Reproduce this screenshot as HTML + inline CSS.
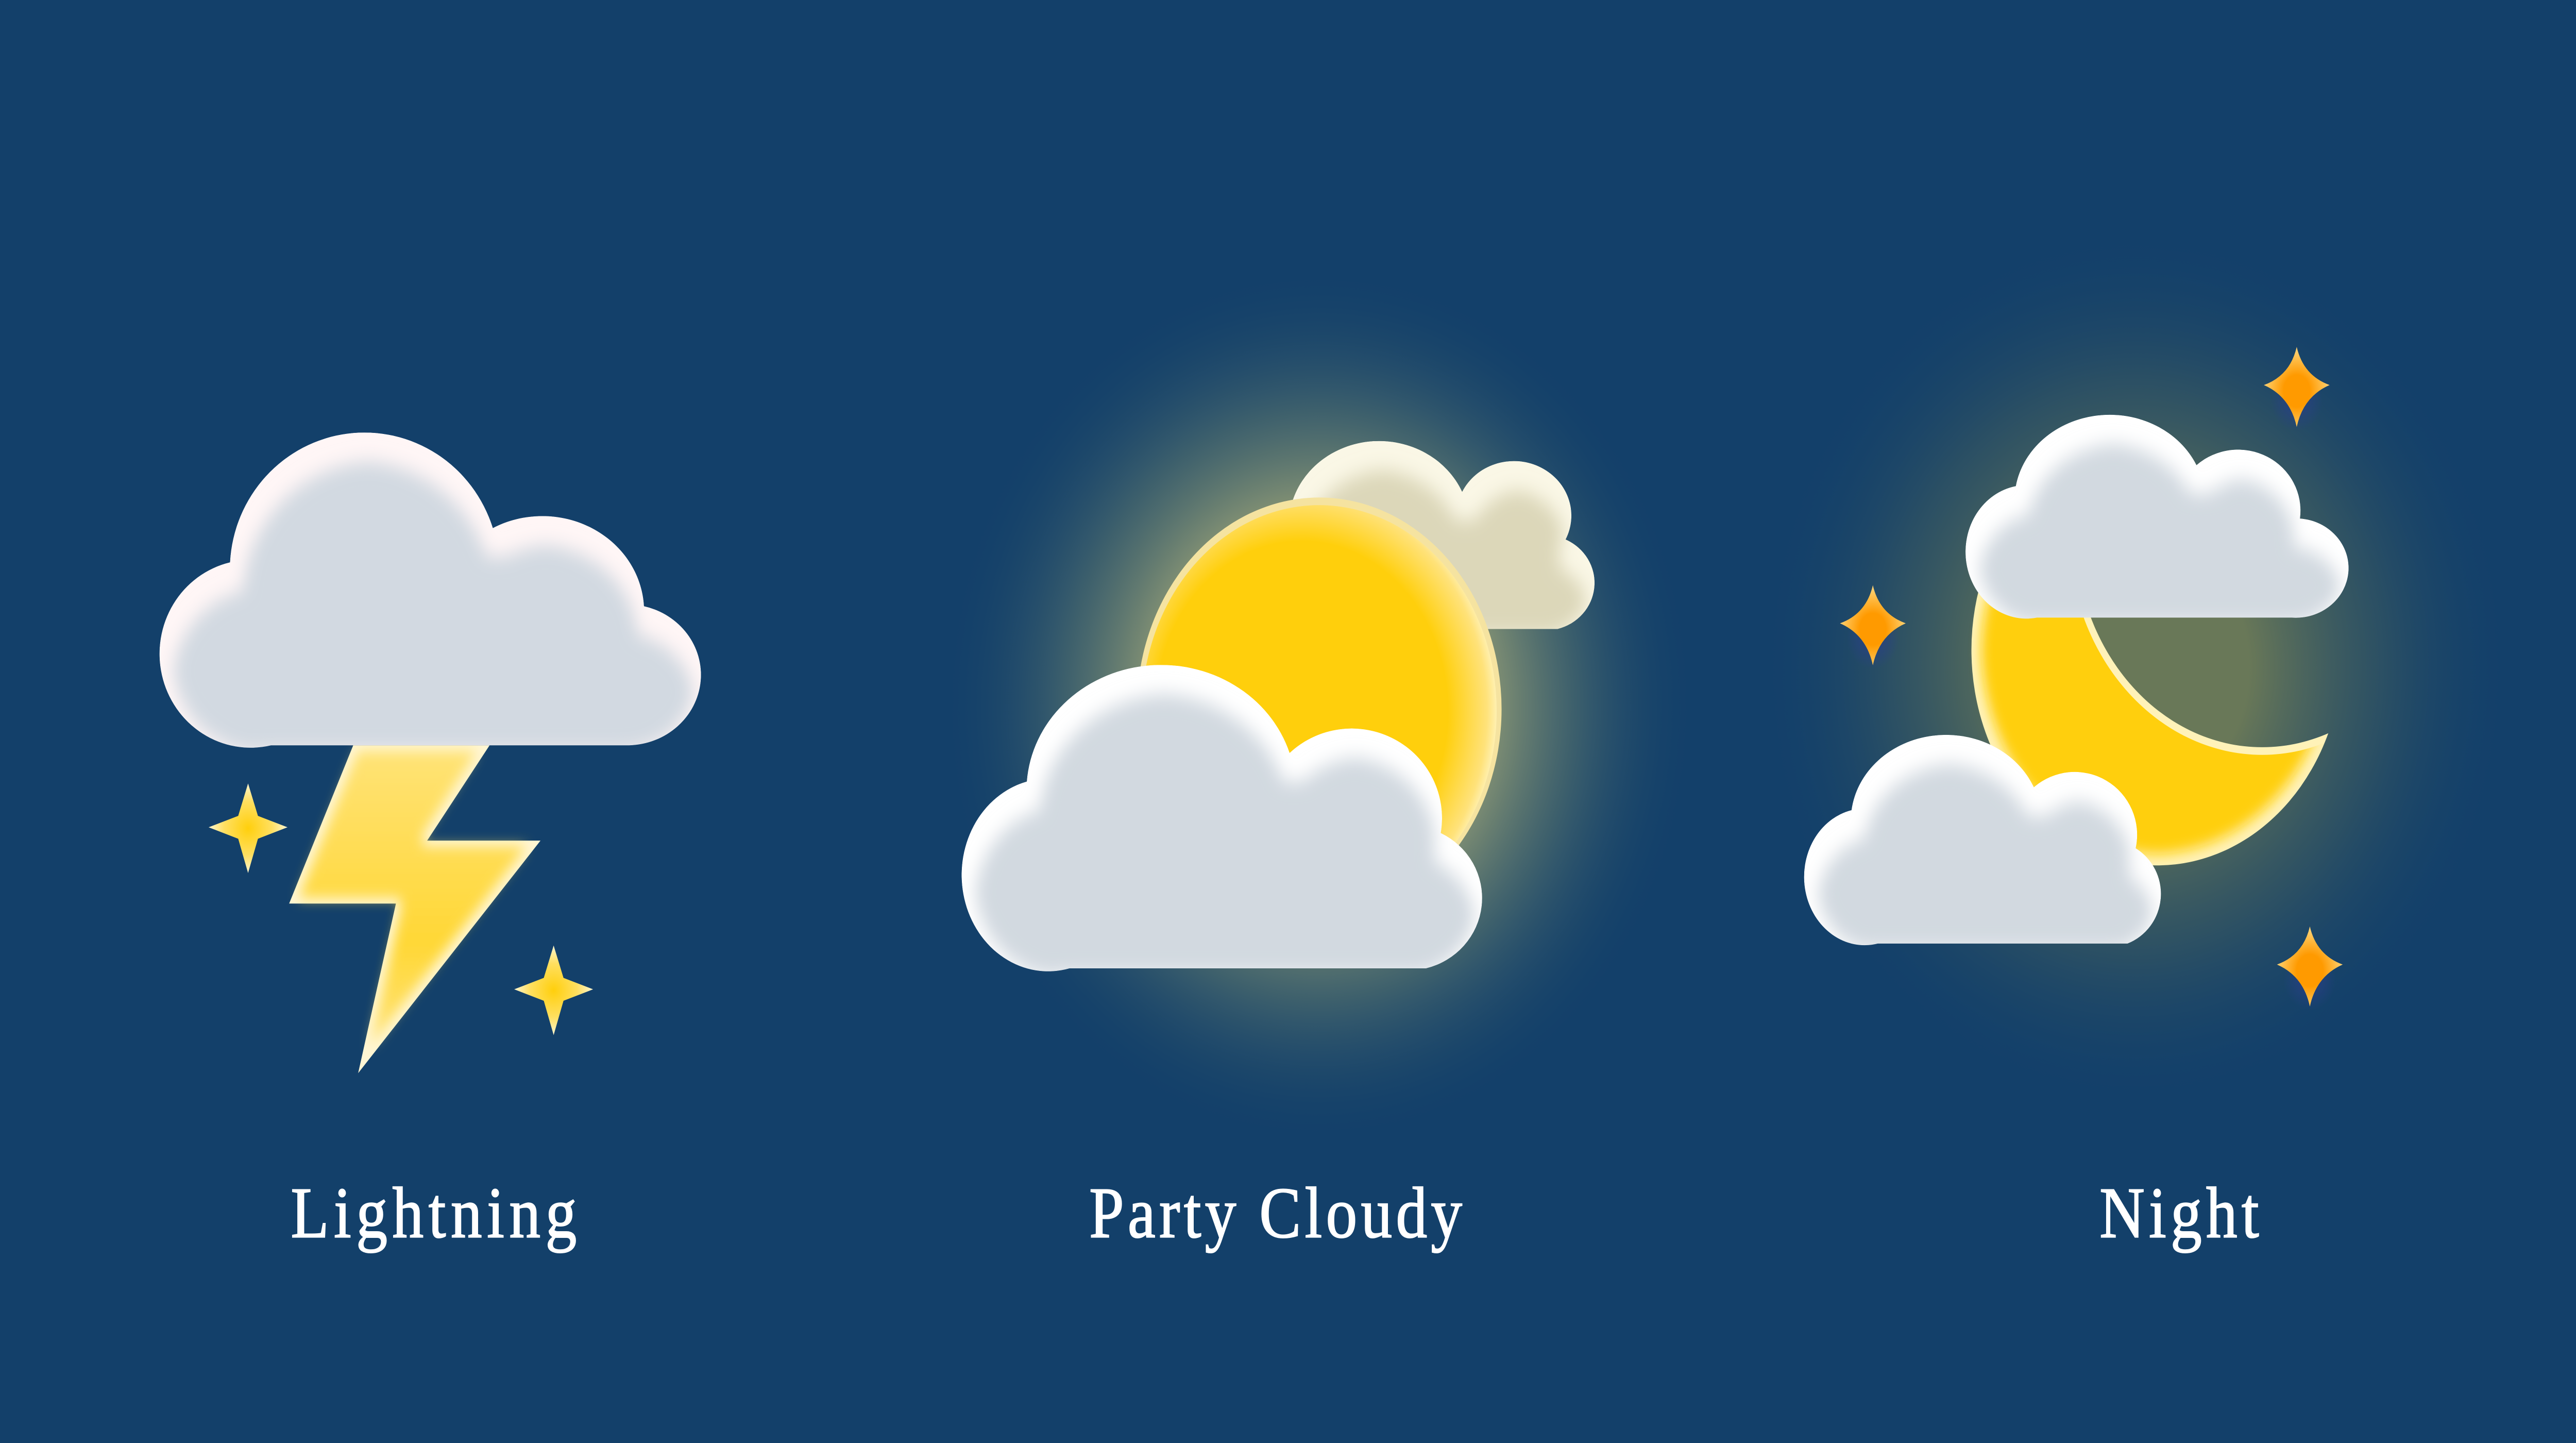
<!DOCTYPE html>
<html><head><meta charset="utf-8"><style>
html,body{margin:0;padding:0;background:#13406a;width:100%;height:100%;overflow:hidden}
svg{display:block;position:fixed;left:0;top:0;width:100vw;height:100vh}
</style></head><body>
<svg viewBox="0 0 1568 757" preserveAspectRatio="none" xmlns="http://www.w3.org/2000/svg">
<defs>
<radialGradient id="sunGlow" cx="803" cy="370" r="230" gradientUnits="userSpaceOnUse">
<stop offset="0.4" stop-color="#c8c27a" stop-opacity="0.75"/>
<stop offset="0.7" stop-color="#8a9a70" stop-opacity="0.3"/>
<stop offset="1" stop-color="#13406a" stop-opacity="0"/>
</radialGradient>
<radialGradient id="moonGlow" cx="1300" cy="350" r="230" gradientUnits="userSpaceOnUse">
<stop offset="0.3" stop-color="#8e9050" stop-opacity="0.7"/>
<stop offset="0.65" stop-color="#5a6e58" stop-opacity="0.35"/>
<stop offset="1" stop-color="#13406a" stop-opacity="0"/>
</radialGradient>
<radialGradient id="sunFill" cx="0.45" cy="0.5" r="0.55">
<stop offset="0.75" stop-color="#ffcf0c"/>
<stop offset="0.95" stop-color="#ffe27a"/>
<stop offset="1" stop-color="#fff0b0"/>
</radialGradient>
<linearGradient id="bolt" x1="0" y1="0" x2="0" y2="1">
<stop offset="0" stop-color="#ffe47a"/>
<stop offset="0.6" stop-color="#ffd838"/>
<stop offset="1" stop-color="#ffe890"/>
</linearGradient>
<radialGradient id="spark" cx="0.5" cy="0.5" r="0.5">
<stop offset="0" stop-color="#ffcf0c"/>
<stop offset="0.6" stop-color="#ffdf60"/>
<stop offset="1" stop-color="#fff6d0"/>
</radialGradient>
<radialGradient id="ostar" cx="0.5" cy="0.55" r="0.5">
<stop offset="0.4" stop-color="#ff9a00"/>
<stop offset="1" stop-color="#ffd070"/>
</radialGradient>
<radialGradient id="blueGlow" cx="0.5" cy="0.5" r="0.5">
<stop offset="0" stop-color="#2a3f8a" stop-opacity="0.9"/>
<stop offset="1" stop-color="#2a3f8a" stop-opacity="0"/>
</radialGradient>
<filter id="inner" x="-10%" y="-10%" width="120%" height="130%">
<feMorphology operator="erode" radius="6"/>
<feGaussianBlur stdDeviation="5"/>
<feOffset dx="2" dy="9"/>
</filter>
<filter id="soft" x="-20%" y="-20%" width="140%" height="140%">
<feMorphology operator="erode" radius="3"/>
<feGaussianBlur stdDeviation="3.5"/>
</filter>

<path id="c1" d="M165,391 H383 A45,37 0 0 0 392,318 A62,50 0 0 0 300,277 A82,72 0 0 0 140,295 A54,48 0 0 0 165,391 Z"/>
<path id="c2" d="M651,508 H868 A45,38 0 0 0 877,437 A55,47 0 0 0 785,395 A82,66 0 0 0 625,410 A50,48 0 0 0 651,508 Z"/>
<path id="c3" d="M820,330 H948 A30,25 0 0 0 953,283 A33,27 0 0 0 890,258 A55,44 0 0 0 786,265 L790,330 Z"/>
<path id="c4" d="M1240,324 H1395 A32,26 0 0 0 1400,272 A38,32 0 0 0 1337,244 A58,45 0 0 0 1227,255 A36,34 0 0 0 1240,324 Z"/>
<path id="c5" d="M1143,495 H1295 A32,28 0 0 0 1300,445 A38,33 0 0 0 1238,413 A58,45 0 0 0 1127,425 A36,35 0 0 0 1143,495 Z"/>
<clipPath id="k1"><use href="#c1"/></clipPath>
<clipPath id="k2"><use href="#c2"/></clipPath>
<clipPath id="k3"><use href="#c3"/></clipPath>
<clipPath id="k4"><use href="#c4"/></clipPath>
<clipPath id="k5"><use href="#c5"/></clipPath>
<mask id="moonMask">
<rect width="1568" height="757" fill="#fff"/>
<circle cx="1377" cy="278" r="114" fill="#000"/>
</mask>
<mask id="moonMaskIn">
<rect width="1568" height="757" fill="#fff"/>
<circle cx="1377" cy="278" r="118" fill="#000"/>
</mask>
</defs>

<rect width="1568" height="757" fill="#13406a"/>

<polygon points="215,391 298,391 260,441 329,441 218,563 241,474 176,474" fill="#fff6d4"/>
<polygon points="215,391 298,391 260,441 329,441 218,563 241,474 176,474" fill="url(#bolt)" filter="url(#soft)"/>
<g clip-path="url(#k1)">
<use href="#c1" fill="#fff6f6"/>
<use href="#c1" fill="#d2d9e1" filter="url(#inner)"/>
</g>
<path d="M151,411 L157,428 L175,434 L157,440 L151,458 L145,440 L127,434 L145,428 Z" fill="url(#spark)"/>
<path d="M337,496 L343,513 L361,519 L343,525 L337,543 L331,525 L313,519 L331,513 Z" fill="url(#spark)"/>

<circle cx="803" cy="370" r="235" fill="url(#sunGlow)"/>
<g clip-path="url(#k3)">
<use href="#c3" fill="#faf7e6"/>
<use href="#c3" fill="#dcd7b9" filter="url(#inner)"/>
</g>
<circle cx="803" cy="372" r="111" fill="#f5e3a0"/>
<circle cx="803" cy="373" r="108" fill="url(#sunFill)"/>
<g clip-path="url(#k2)">
<use href="#c2" fill="#ffffff"/>
<use href="#c2" fill="#d2d9e0" filter="url(#inner)"/>
</g>

<circle cx="1300" cy="350" r="240" fill="url(#moonGlow)"/>
<circle cx="1398" cy="210" r="16" fill="url(#blueGlow)"/>
<circle cx="1140" cy="335" r="16" fill="url(#blueGlow)"/>
<circle cx="1406" cy="514" r="16" fill="url(#blueGlow)"/>
<circle cx="1313" cy="341" r="113" fill="#fff2b8" mask="url(#moonMask)"/>
<circle cx="1313" cy="341" r="110" fill="#ffcf0c" mask="url(#moonMaskIn)" filter="url(#soft)"/>
<g clip-path="url(#k4)">
<use href="#c4" fill="#ffffff"/>
<use href="#c4" fill="#d2d9e0" filter="url(#inner)"/>
</g>
<g clip-path="url(#k5)">
<use href="#c5" fill="#ffffff"/>
<use href="#c5" fill="#d2d9e0" filter="url(#inner)"/>
</g>
<path d="M1398,182 Q1402,197 1418,202 Q1402,208 1398,224 Q1394,208 1378,202 Q1394,197 1398,182 Z" fill="url(#ostar)"/>
<path d="M1140,307 Q1144,322 1160,327 Q1144,333 1140,349 Q1136,333 1120,327 Q1136,322 1140,307 Z" fill="url(#ostar)"/>
<path d="M1406,486 Q1410,501 1426,506 Q1410,512 1406,528 Q1402,512 1386,506 Q1402,501 1406,486 Z" fill="url(#ostar)"/>

<g font-family="'Liberation Serif', 'DejaVu Serif', serif" font-size="38" fill="#ffffff" stroke="#ffffff" stroke-width="0.6">
<text x="177" y="649" textLength="174" lengthAdjust="spacing">Lightning</text>
<text x="663" y="649" textLength="227" lengthAdjust="spacing">Party Cloudy</text>
<text x="1278" y="649" textLength="97" lengthAdjust="spacing">Night</text>
</g>
</svg>
</body></html>
